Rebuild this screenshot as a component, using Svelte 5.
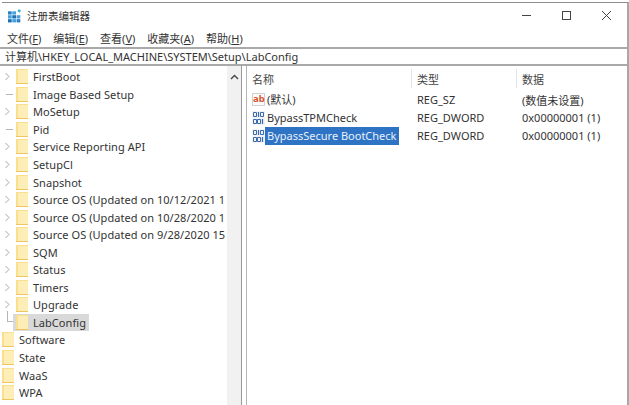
<script lang="ts">
	type Node = { name: string; level: number; mark: 'arrow' | 'line' | 'end' | 'none'; active?: boolean };

	const nodes: Node[] = [
		{ name: 'FirstBoot', level: 1, mark: 'arrow' },
		{ name: 'Image Based Setup', level: 1, mark: 'line' },
		{ name: 'MoSetup', level: 1, mark: 'arrow' },
		{ name: 'Pid', level: 1, mark: 'line' },
		{ name: 'Service Reporting API', level: 1, mark: 'arrow' },
		{ name: 'SetupCl', level: 1, mark: 'arrow' },
		{ name: 'Snapshot', level: 1, mark: 'arrow' },
		{ name: 'Source OS (Updated on 10/12/2021 1', level: 1, mark: 'arrow' },
		{ name: 'Source OS (Updated on 10/28/2020 1', level: 1, mark: 'arrow' },
		{ name: 'Source OS (Updated on 9/28/2020 15', level: 1, mark: 'arrow' },
		{ name: 'SQM', level: 1, mark: 'arrow' },
		{ name: 'Status', level: 1, mark: 'arrow' },
		{ name: 'Timers', level: 1, mark: 'arrow' },
		{ name: 'Upgrade', level: 1, mark: 'arrow' },
		{ name: 'LabConfig', level: 1, mark: 'end', active: true },
		{ name: 'Software', level: 0, mark: 'none' },
		{ name: 'State', level: 0, mark: 'none' },
		{ name: 'WaaS', level: 0, mark: 'none' },
		{ name: 'WPA', level: 0, mark: 'none' }
	];

	const menus = [
		['文件(', 'F', ')'],
		['编辑(', 'E', ')'],
		['查看(', 'V', ')'],
		['收藏夹(', 'A', ')'],
		['帮助(', 'H', ')']
	];

	const values = [
		{ name: '(默认)', type: 'REG_SZ', data: '(数值未设置)', icon: 'text' },
		{ name: 'BypassTPMCheck', type: 'REG_DWORD', data: '0x00000001 (1)', icon: 'bin' },
		{ name: 'BypassSecure BootCheck', type: 'REG_DWORD', data: '0x00000001 (1)', icon: 'bin', selected: true }
	];
</script>

{#snippet binIcon()}
	<svg class="val-icon" width="13" height="14" viewBox="0 0 13 14">
		<rect width="13" height="14" fill="#f1f3f8" />
		<path d="M1.5 1.5h3v4h-3zM8.5 1.5h3v4h-3zM1.5 8.5h3v4h-3zM5.5 8.5h3v4h-3z" fill="none" stroke="#3a6aa8" />
		<path d="M6.5 1v5M10.5 8v5" stroke="#3a6aa8" stroke-width="1.2" />
	</svg>
{/snippet}

<div class="window">
	<header class="titlebar">
		<svg class="app-icon" width="14" height="15" viewBox="0 0 15 15">
			<rect x="0" y="3" width="4" height="3.5" fill="#2a80c8" />
			<rect x="4.6" y="3" width="4" height="3.5" fill="#45a0dc" />
			<rect x="0" y="7.2" width="4" height="3.5" fill="#45a0dc" />
			<rect x="4.6" y="7.2" width="4" height="3.5" fill="#1f6fb5" />
			<rect x="9.2" y="7.2" width="4" height="3.5" fill="#45a0dc" />
			<rect x="0" y="11.4" width="4" height="3.5" fill="#1f6fb5" />
			<rect x="4.6" y="11.4" width="4" height="3.5" fill="#45a0dc" />
			<rect x="9.2" y="11.4" width="4" height="3.5" fill="#2a80c8" />
			<path d="M11.5 0.5l2.4 1.6-1.4 2.4-2.4-1.6z" fill="#3fb0d8" />
		</svg>
		<span class="title">注册表编辑器</span>
		<div class="controls">
			<svg width="11" height="11" viewBox="0 0 11 11"><path d="M1 5.5h9" stroke="#444" /></svg>
			<svg width="11" height="11" viewBox="0 0 11 11"><rect x="1.5" y="1.5" width="8" height="8" fill="none" stroke="#444" /></svg>
			<svg width="11" height="11" viewBox="0 0 11 11"><path d="M1 1l9 9M10 1l-9 9" stroke="#444" /></svg>
		</div>
	</header>

	<nav class="menubar">
		{#each menus as m}
			<span class="menu">{m[0]}<u>{m[1]}</u>{m[2]}</span>
		{/each}
	</nav>

	<div class="address">计算机\HKEY_LOCAL_MACHINE\SYSTEM\Setup\LabConfig</div>

	<div class="panes">
		<aside class="tree-pane">
			<div class="tree">
				{#each nodes as node}
					<div class="node">
						{#if node.level === 1}
							<span class="mark">
								{#if node.mark === 'arrow'}
									<svg width="7" height="9" viewBox="0 0 7 9"><path d="M1.5 1l3.5 3.5-3.5 3.5" fill="none" stroke="#a6a6a6" /></svg>
								{:else if node.mark === 'line'}
									<span class="tick"></span>
								{:else}
									<span class="elbow"></span>
								{/if}
							</span>
						{/if}
						<span class="entry" class:active={node.active}>
							<svg class="folder" width="12" height="15" viewBox="0 0 12 15">
								<rect width="12" height="15" fill="#fbdf8c" />
								<rect x="2" y="1" width="10" height="13" fill="#fdeeb8" />
								<rect y="14" width="12" height="1" fill="#eec65d" />
							</svg>
							<span class="label">{node.name}</span>
						</span>
					</div>
				{/each}
			</div>
			<div class="scrollbar">
				<svg width="9" height="6" viewBox="0 0 9 6"><path d="M1 5l3.5-3.5L8 5" fill="none" stroke="#444" stroke-width="1.4" /></svg>
			</div>
		</aside>

		<main class="list-pane">
			<div class="row head">
				<span class="col-name">名称</span>
				<span class="col-type">类型</span>
				<span class="col-data">数据</span>
			</div>
			{#each values as v}
				<div class="row">
					<span class="col-name">
						{#if v.icon === 'text'}
							<span class="ab-icon">ab</span>
						{:else}
							{@render binIcon()}
						{/if}
						<span class="val-name" class:selected={v.selected}>{v.name}</span>
					</span>
					<span class="col-type">{v.type}</span>
					<span class="col-data">{v.data}</span>
				</div>
			{/each}
		</main>
	</div>
</div>

<style>
	:global(body) {
		margin: 0;
		background: #fff;
		overflow: hidden;
	}

	.window {
		width: 629px;
		height: 405px;
		box-sizing: border-box;
		padding-top: 2px;
		display: flex;
		flex-direction: column;
		overflow: hidden;
		font-family: 'Noto Sans', 'Noto Sans CJK SC', sans-serif;
		font-size: 11px;
		color: #333;
	}

	.titlebar {
		height: 27px;
		box-sizing: border-box;
		border-top: 1px solid #8e8e8e;
		border-right: 2px solid #a8a8a8;
		margin-left: 2px;
		padding-left: 6px;
		padding-bottom: 2px;
		display: flex;
		align-items: center;
		flex: none;
	}

	.title {
		margin-left: 5px;
		font-size: 10.5px;
	}

	.controls {
		margin-left: auto;
		margin-right: 15px;
		display: flex;
		gap: 29px;
	}

	.menubar {
		height: 18px;
		box-sizing: border-box;
		padding: 0 0 1px 7px;
		flex: none;
		display: flex;
		align-items: center;
		gap: 12px;
		border-right: 2px solid #a8a8a8;
	}

	.menu u {
		text-underline-offset: 1px;
	}

	.address {
		height: 19px;
		flex: none;
		box-sizing: border-box;
		border-top: 2px solid #a9a9a9;
		border-bottom: 2px solid #a9a9a9;
		border-right: 2px solid #a8a8a8;
		padding-left: 5px;
		line-height: 15px;
		white-space: nowrap;
	}

	.panes {
		flex: 1;
		min-height: 0;
		display: flex;
		border-right: 2px solid #a8a8a8;
	}

	.tree-pane {
		width: 242px;
		flex: none;
		box-sizing: border-box;
		display: flex;
		border-right: 1px solid #9a9a9a;
	}

	.tree {
		width: 227px;
		flex: none;
		overflow: hidden;
		padding-top: 2px;
		padding-left: 2px;
		box-sizing: border-box;
	}

	.node {
		height: 17.55px;
		display: flex;
		align-items: center;
		white-space: nowrap;
	}

	.label {
		letter-spacing: 0.05px;
	}

	.mark {
		width: 14px;
		height: 100%;
		flex: none;
		display: flex;
		align-items: center;
		padding-left: 2px;
		box-sizing: border-box;
	}

	.tick {
		width: 6px;
		height: 1px;
		margin-left: 3px;
		background: #b5b5b5;
		box-shadow: -1px 0 0 #b5b5b5;
	}

	.elbow {
		width: 6px;
		height: 11px;
		margin: -11px 0 0 3px;
		border-left: 1px solid #b5b5b5;
		border-bottom: 1px solid #b5b5b5;
		box-sizing: border-box;
	}

	.entry {
		display: flex;
		align-items: center;
		height: 17px;
		gap: 5px;
	}

	.entry.active {
		background: #d9d9d9;
		padding-right: 3px;
		margin-left: -3px;
		padding-left: 3px;
	}

	.folder {
		flex: none;
	}

	.scrollbar {
		width: 14px;
		flex: none;
		background: #f1f1f1;
		display: flex;
		justify-content: center;
		align-items: flex-start;
		padding-top: 8px;
		box-sizing: border-box;
	}

	.list-pane {
		flex: 1;
		min-width: 0;
		margin-left: 4px;
		padding-top: 3px;
		border-left: 1px solid #b4b4b4;
	}

	.row {
		display: flex;
		align-items: center;
		height: 18px;
		white-space: nowrap;
	}

	.row.head {
		height: 19px;
		margin-bottom: 2.5px;
		color: #444;
	}

	.col-name {
		width: 164px;
		box-sizing: border-box;
		padding-left: 5px;
		display: flex;
		align-items: center;
		gap: 0;
	}

	.col-type {
		width: 105px;
		box-sizing: border-box;
		padding-left: 6px;
	}

	.col-data {
		padding-left: 6px;
	}

	.head .col-type,
	.head .col-data {
		border-left: 1px solid #e5e5e5;
		height: 100%;
		display: flex;
		align-items: center;
		padding-left: 5px;
	}

	.ab-icon {
		width: 13px;
		height: 13px;
		flex: none;
		box-sizing: border-box;
		border: 1px solid #cfcfd8;
		background: #fbfbfb;
		color: #d8542f;
		font-size: 9.5px;
		font-weight: 700;
		line-height: 10px;
		text-align: center;
	}

	.val-icon {
		flex: none;
	}

	.val-name {
		padding: 0 3px 0 2px;
		line-height: 18px;
	}

	.val-name.selected {
		background: #2f74c4;
		color: #e8f0fa;
	}
</style>
